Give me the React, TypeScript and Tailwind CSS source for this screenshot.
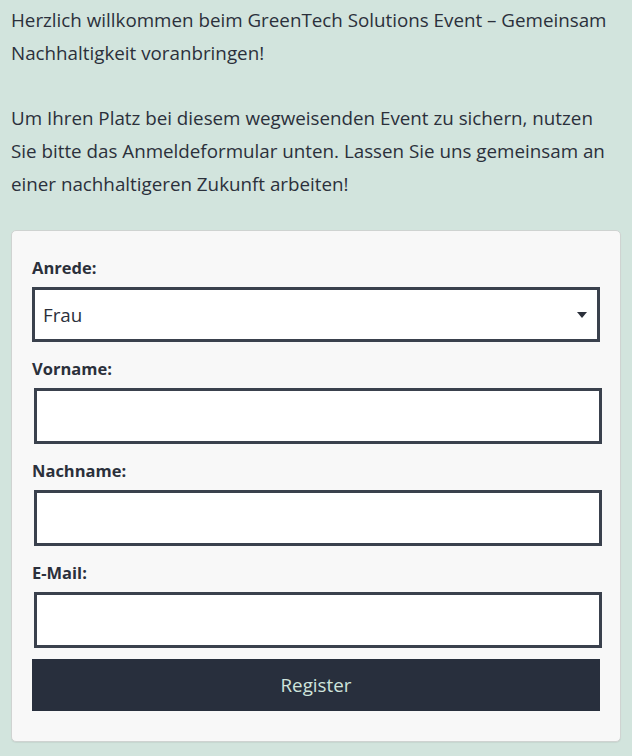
import React from 'react';

const fields = [
  { id: 'vorname', label: 'Vorname:', type: 'text' },
  { id: 'nachname', label: 'Nachname:', type: 'text' },
  { id: 'email', label: 'E-Mail:', type: 'email' },
];

export default function App() {
  return (
    <div
      className="min-h-screen bg-[#d2e4dd] px-[11px] pt-[4px] pb-4 text-[#2b303b]"
      style={{ fontFamily: '"Open Sans", "Noto Sans", sans-serif' }}
    >
      <p className="text-[18.8px] leading-[33.3px] pr-[6px] mb-[31px]">
        Herzlich willkommen beim GreenTech Solutions Event – Gemeinsam Nachhaltigkeit voranbringen!
      </p>
      <p className="text-[18.8px] leading-[33.3px] pr-[6px] mb-[29px]">
        Um Ihren Platz bei diesem wegweisenden Event zu sichern, nutzen Sie bitte das Anmeldeformular unten.
        Lassen Sie uns gemeinsam an einer nachhaltigeren Zukunft arbeiten!
      </p>

      <form className="bg-[#f8f8f8] border border-[#cfd3d1] rounded-[5px] px-5 pt-[25px] pb-[30px] shadow-[0_1px_1px_rgba(0,0,0,0.06)]">
        <label htmlFor="anrede" className="block text-[16.5px] font-bold leading-6 mb-[7px]">
          Anrede:
        </label>
        <div className="relative mb-[15px]">
          <select
            id="anrede"
            defaultValue="Frau"
            className="appearance-none block w-full h-[55px] bg-white border-[3px] border-[#3a414d] rounded-none pl-[8px] text-[18.8px] text-[#2b303b] outline-none"
          >
            <option>Frau</option>
            <option>Herr</option>
            <option>Divers</option>
          </select>
          <svg
            className="absolute right-[13px] top-[25px] w-[10px] h-[6px] pointer-events-none"
            viewBox="0 0 10 6"
          >
            <path d="M0 0h10L5 6z" fill="#2b303b" />
          </svg>
        </div>

        {fields.map((f) => (
          <div key={f.id}>
            <label htmlFor={f.id} className="block text-[16.5px] font-bold leading-6 mb-[7px]">
              {f.label}
            </label>
            <input
              id={f.id}
              type={f.type}
              className="block w-full ml-[2px] h-[56px] bg-white border-[3px] border-[#3a414d] outline-none px-2 text-[18px] mb-[15px]"
            />
          </div>
        ))}

        <button
          type="submit"
          className="block w-full h-[52px] -mt-[4px] bg-[#282f3d] text-[#cfe4dc] text-[18.8px]"
        >
          Register
        </button>
      </form>
    </div>
  );
}
